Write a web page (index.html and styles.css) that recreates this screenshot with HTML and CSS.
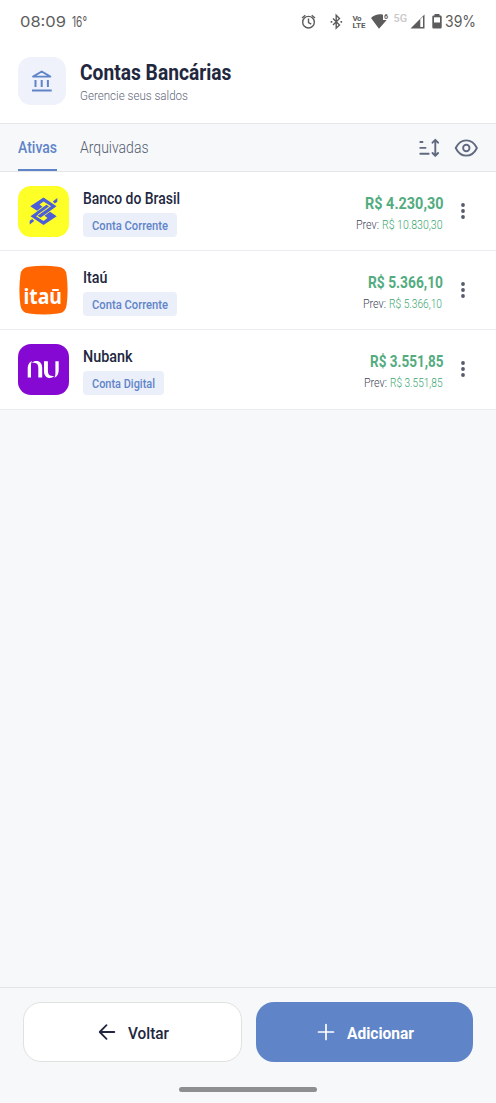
FILE: index.html
```html
<!DOCTYPE html>
<html lang="pt-BR">
<head>
<meta charset="utf-8">
<meta name="viewport" content="width=device-width, initial-scale=1">
<title>Contas Bancárias</title>
<link rel="stylesheet" href="styles.css">
</head>
<body>
<div class="app">
  <div class="status">
    <span class="fit clock" data-w="46"><span>08:09</span></span>
    <span class="fit temp" data-w="15"><span>16°</span></span>
    <svg class="status-icons" width="144" height="24" viewBox="300 10 144 24" fill="none" stroke="#5c5c5c" stroke-width="1.4">
      <circle cx="308.500" cy="22.200" r="5.800"/><path d="M308.500 18.500v4.200l2.800 1.500M302 18l3.300-2.800M315 18l-3.300-2.800"/>
      <path d="M333 18.500l6.500 6.500-3.300 3.200V15.200l3.300 3.300-6.500 6.500"/><path d="M330.700 21.800h1.600M340.500 21.800h1.600" stroke-width="1.700"/>
      <g fill="#5c5c5c" stroke="none">
        <text x="352.500" y="20.500" class="volte" textLength="9">Vo</text>
        <text x="352.500" y="27.800" class="volte" textLength="13" lengthAdjust="spacingAndGlyphs">LTE</text>
        <path d="M371 18c3.500-3.500 8.500-4.300 12-3.200v5.200h3.700L379 28.800z"/>
        <text x="384" y="19.300" class="six">6</text>
        <text x="393.500" y="22.300" class="five-g" textLength="13.500" lengthAdjust="spacingAndGlyphs">5G</text>
        <path d="M424.500 14.500V28.500H410.500z"/><path d="M420.300 19.200l2.700-2.500V27h-2.700z" fill="#fff"/>
        <path d="M434.500 14h5v1.500h1a1.200 1.200 0 0 1 1.200 1.200v10.600a1.200 1.200 0 0 1-1.200 1.200h-7a1.200 1.200 0 0 1-1.200-1.200V16.700a1.200 1.200 0 0 1 1.200-1.200h1z"/><path d="M434 17.300h6v5.200h-6z" fill="#fff"/>
      </g>
    </svg>
    <span class="fit battery" data-w="31"><span>39%</span></span>
  </div>

  <header class="header">
    <div class="badge">
      <svg width="28" height="28" viewBox="28 66 28 28" fill="none" stroke="#6084c8" stroke-width="1.800">
        <path d="M33 75.600L41.700 70.500l8.700 5.100z" stroke-linejoin="round"/><path d="M35.500 79v7M41.700 79v7M47.900 79v7M32 89.400h19.700" stroke-width="2"/>
      </svg>
    </div>
    <div>
      <h1 class="title"><span class="fit" data-w="151.500"><span>Contas Bancárias</span></span></h1>
      <p class="subtitle"><span class="fit" data-w="108"><span>Gerencie seus saldos</span></span></p>
    </div>
  </header>

  <nav class="tabs">
    <a class="tab tab-active"><span class="fit" data-w="39"><span>Ativas</span></span></a>
    <a class="tab"><span class="fit" data-w="68.500"><span>Arquivadas</span></span></a>
    <svg class="tools" width="62" height="28" viewBox="416 134 62 28" fill="none" stroke="#626a80" stroke-width="1.900" stroke-linecap="round" stroke-linejoin="round">
      <path d="M420.300 142h2.200M420.300 147.900h5.200M420.300 153.700h8.400M435.300 141v14M432.500 142.700l2.800-2.900 2.800 2.900M432.500 153l2.800 2.900 2.800-2.900"/>
      <path d="M455.700 148c5-10.200 16.200-10.200 21.200 0-5 10.200-16.200 10.200-21.200 0z"/><circle cx="466.300" cy="148" r="3.200"/>
    </svg>
  </nav>

  <main class="list">
    <section class="row">
      <svg class="logo" width="51" height="51" viewBox="0 0 51 51">
        <rect width="51" height="51" rx="13" fill="#fdff27"/>
        <g fill="#4c5ed8">
          <path d="M25.500 11.500L38.500 20.300L22.500 31.800L19.500 29.800L33 20.300L25.500 15.500L21.500 18.500L24.500 20.800L19 24.800L12.300 20.300z"/>
          <path d="M25.500 39L12.500 30.200L28.500 18.700L31.500 20.700L18 30.200L25.500 35L29.500 32L26.500 29.700L32 25.700L38.700 30.200z"/>
          <path d="M34.800 15.400L39.300 12V15.700L36.800 17.500zM16.200 35.100L11.700 38.500V34.800L14.200 33z"/>
        </g>
        <path d="M20 28.800L31.500 20.500" stroke="#fdff27" stroke-width=".8"/>
      </svg>
      <div class="info">
        <div class="name"><span class="fit" data-w="97"><span>Banco do Brasil</span></span></div>
        <div class="chip"><span class="fit" data-w="76"><span>Conta Corrente</span></span></div>
      </div>
      <div class="money">
        <div class="amount"><span class="fit" data-w="78.500"><span>R$ 4.230,30</span></span></div>
        <div class="forecast"><span class="fit" data-w="23"><span>Prev:</span></span><span class="fit value" data-w="60.500"><span>R$ 10.830,30</span></span></div>
      </div>
      <svg class="dots" width="6" height="18" viewBox="0 0 6 18"><circle cx="3" cy="3" r="1.900"/><circle cx="3" cy="9" r="1.900"/><circle cx="3" cy="15" r="1.900"/></svg>
    </section>

    <section class="row">
      <svg class="logo" width="51" height="51" viewBox="0 0 51 51">
        <path d="M11 1.800Q25.500-.2 40 1.800Q48 2.600 48.600 10Q50.600 25.500 48.600 40Q48 47.500 40 48.600Q25.500 50.600 11 48.600Q3 47.500 2.400 40Q.4 25.500 2.400 10Q3 2.600 11 1.800z" fill="#ff6500"/>
        <text class="itau" x="5.500" y="38.500" textLength="38.500" lengthAdjust="spacingAndGlyphs">itaū</text>
      </svg>
      <div class="info">
        <div class="name"><span class="fit" data-w="24.500"><span>Itaú</span></span></div>
        <div class="chip"><span class="fit" data-w="76"><span>Conta Corrente</span></span></div>
      </div>
      <div class="money">
        <div class="amount"><span class="fit" data-w="75"><span>R$ 5.366,10</span></span></div>
        <div class="forecast"><span class="fit" data-w="23"><span>Prev:</span></span><span class="fit value" data-w="53"><span>R$ 5.366,10</span></span></div>
      </div>
      <svg class="dots" width="6" height="18" viewBox="0 0 6 18"><circle cx="3" cy="3" r="1.900"/><circle cx="3" cy="9" r="1.900"/><circle cx="3" cy="15" r="1.900"/></svg>
    </section>

    <section class="row">
      <svg class="logo" width="51" height="51" viewBox="0 0 51 51">
        <rect width="51" height="51" rx="13" fill="#8508d3"/>
        <g fill="#fff">
          <path d="M9.700 33.500V25c0-4.200 1.700-7.300 4.500-7.800-1.200 1.300-1.200 3-1.200 5.500v10.800z"/>
          <path d="M14 18.800c1.200-1.300 2.600-1.900 4.300-1.900 3.800 0 5.900 2.700 5.900 7v9.600h-3.900v-9.200c0-3.500-1-5-3.100-5.300-1.200-.2-2.200-.2-3.200-.2z"/>
          <path d="M26 17.300h3.900v9.200c0 3.500 1 5 3.100 5.300 1.200.2 2.200.2 3.200.2-1.200 1.300-2.600 1.900-4.300 1.900-3.800 0-5.900-2.700-5.900-7z"/>
          <path d="M40.700 17.300v8.500c0 4.200-1.700 7.300-4.500 7.800 1.200-1.300 1.200-3 1.200-5.500V17.300z"/>
        </g>
      </svg>
      <div class="info">
        <div class="name"><span class="fit" data-w="49.500"><span>Nubank</span></span></div>
        <div class="chip"><span class="fit" data-w="63"><span>Conta Digital</span></span></div>
      </div>
      <div class="money">
        <div class="amount"><span class="fit" data-w="73.500"><span>R$ 3.551,85</span></span></div>
        <div class="forecast"><span class="fit" data-w="23"><span>Prev:</span></span><span class="fit value" data-w="52.500"><span>R$ 3.551,85</span></span></div>
      </div>
      <svg class="dots" width="6" height="18" viewBox="0 0 6 18"><circle cx="3" cy="3" r="1.900"/><circle cx="3" cy="9" r="1.900"/><circle cx="3" cy="15" r="1.900"/></svg>
    </section>
  </main>

  <footer class="footer">
    <div class="actions">
      <button class="btn btn-back">
        <svg width="18" height="18" viewBox="0 0 18 18" fill="none" stroke="#222740" stroke-width="1.800" stroke-linecap="round" stroke-linejoin="round"><path d="M16.300 9H2M8.500 2.200L1.700 9l6.800 6.800"/></svg>
        <span class="fit" data-w="41"><span>Voltar</span></span>
      </button>
      <button class="btn btn-add">
        <svg width="18" height="18" viewBox="0 0 18 18" fill="none" stroke="#fff" stroke-width="1.700" stroke-linecap="round"><path d="M9 1.500v15M1.500 9h15"/></svg>
        <span class="fit" data-w="67"><span>Adicionar</span></span>
      </button>
    </div>
    <div class="home-bar"></div>
  </footer>
</div>
<script src="fit.js"></script>
</body>
</html>
```
FILE: styles.css
```css
* { box-sizing: border-box; }
body { margin: 0; font-family: Roboto, sans-serif; color: #222740; }
h1, p { margin: 0; }
svg { display: block; flex: none; }

.app { display: flex; flex-direction: column; width: 496px; height: 1103px; background: #f6f8fa; overflow: hidden; }

/* Condensed labels: the inner text is scaled to the label's width */
.fit { display: inline-block; flex: none; white-space: nowrap; text-align: left; }
.fit > span { display: inline-block; transform-origin: 0 50%; }

.status { display: flex; align-items: center; height: 44px; padding-left: 20px; background: #fff; color: #5c5c5c; font-family: Inter, sans-serif; font-size: 15px; line-height: 44px; }
.temp { margin-left: 6px; font-size: 14px; }
.status-icons { margin-left: 213px; }
.battery { margin-left: 1px; font-size: 15.500px; }
.volte { font: 700 8px Roboto, sans-serif; }
.six { font: 700 7px Roboto, sans-serif; }
.five-g { font: 500 10px Roboto, sans-serif; fill: #c8c8c8; }

.header { display: flex; gap: 14px; height: 80px; padding: 13px 18px 0; background: #fff; border-bottom: 1px solid #e6e8ec; }
.badge { display: flex; align-items: center; justify-content: center; width: 48px; height: 48px; border-radius: 13px; background: #eff2fa; }
.title { height: 28px; padding-top: 1px; font-size: 21.500px; font-weight: 700; line-height: 30px; }
.subtitle { height: 20px; font-size: 13.500px; font-weight: 300; line-height: 21px; color: #62677a; }

.tabs { display: flex; gap: 23px; height: 48px; padding: 0 18px; border-bottom: 1px solid #e4e6ea; }
.tab { height: 47px; font-size: 16px; font-weight: 300; line-height: 48px; color: #555c70; }
.tab-active { border-bottom: 2px solid #6084c8; color: #6084c8; font-weight: 500; }
.tools { margin: 10px 0 0 auto; }

.row { display: flex; height: 79.200px; padding: 14px 30px 0 18px; background: #fff; border-bottom: 1px solid #eaecef; }
.info { margin-left: 13.500px; }
.name { height: 27px; font-size: 16px; font-weight: 500; line-height: 25px; }
.chip { width: fit-content; height: 24px; padding: 0 9px; border-radius: 4px; background: #ebeffa; color: #6084c8; font-size: 12.800px; font-weight: 500; line-height: 25px; }
.money { margin-left: auto; padding-top: 7px; text-align: right; }
.amount { height: 22px; color: #53ac80; font-size: 16px; font-weight: 700; line-height: 22px; }
.forecast { display: flex; justify-content: flex-end; gap: 3px; height: 20px; padding-right: 1px; font-size: 12.800px; font-weight: 300; line-height: 20px; color: #3f465a; }
.value { color: #3ca672; }
.dots { margin: 16px 0 0 17px; fill: #555b6c; }

.logo { overflow: visible; }
.logo .itau { font: 700 22px "Noto Sans", sans-serif; fill: #fff; }

.footer { display: flex; flex-direction: column; height: 116px; margin-top: auto; padding: 14px 23px 0; border-top: 1px solid #e3e5e8; }
.actions { display: flex; gap: 14px; height: 60px; }
.btn { display: flex; align-items: center; justify-content: center; gap: 12px; padding: 0 0 0 2px; border-radius: 18px; font: 500 17px/24px Roboto, sans-serif; }
.btn .fit { margin-top: 2px; }
.btn-back { width: 219px; background: #fff; border: 1px solid #e0e2df; color: #222740; }
.btn-add { width: 217px; background: #6084c8; border: 0; color: #fff; font-weight: 700; }
.home-bar { align-self: center; width: 138px; height: 5px; margin-top: 25px; border-radius: 3px; background: #8e8f91; }
```
FILE: fit.js
```js
document.querySelectorAll('.fit').forEach(function (label) {
  var width = parseFloat(label.dataset.w);
  var text = label.firstElementChild;
  var natural = text.getBoundingClientRect().width;
  label.style.width = width + 'px';
  text.style.transform = 'scaleX(' + width / natural + ')';
});
```
